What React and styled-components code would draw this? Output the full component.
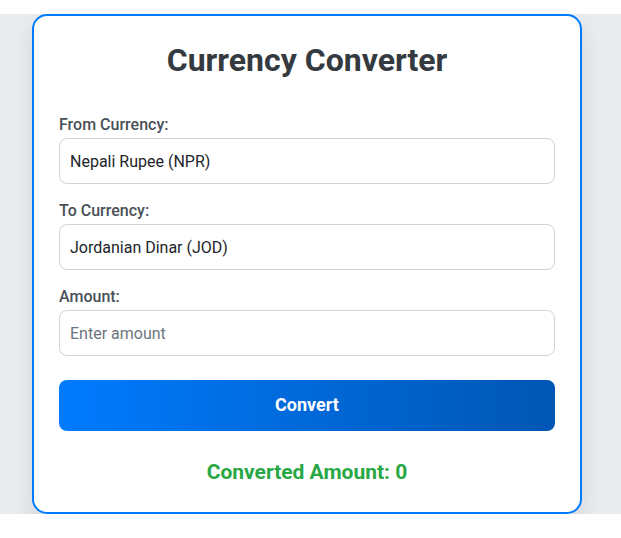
import { useState } from "react";
import styled, { createGlobalStyle } from "styled-components";

const GlobalStyle = createGlobalStyle`
body {
    margin: 0;
    background: #ffffff;
    font-family: 'Roboto', 'Liberation Sans', sans-serif;
}
* {
    box-sizing: border-box;
}
`

const currencies = [
    'Nepali Rupee (NPR)',
    'Jordanian Dinar (JOD)',
    'US Dollar (USD)',
    'Euro (EUR)',
    'Indian Rupee (INR)',
]

export default function App() {
    const [from, setFrom] = useState(currencies[0])
    const [to, setTo] = useState(currencies[1])
    const [amount, setAmount] = useState('')
    const [result, setResult] = useState(0)

    return (<Page>
        <GlobalStyle />
        <Card>
            <Title>Currency Converter</Title>
            <Group>
                <Label>From Currency:</Label>
                <Select value={from} onChange={(e) => setFrom(e.target.value)}>
                    {currencies.map(c => <option key={c}>{c}</option>)}
                </Select>
            </Group>
            <Group>
                <Label>To Currency:</Label>
                <Select value={to} onChange={(e) => setTo(e.target.value)}>
                    {currencies.map(c => <option key={c}>{c}</option>)}
                </Select>
            </Group>
            <Group>
                <Label>Amount:</Label>
                <Input
                    type="number"
                    placeholder="Enter amount"
                    value={amount}
                    onChange={(e) => setAmount(e.target.value)} />
            </Group>
            <ConvertButton onClick={() => setResult(Number(amount) || 0)}>Convert</ConvertButton>
            <Result>Converted Amount: {result}</Result>
        </Card>
    </Page>)
}

const Page = styled.div`
margin-top: 14px;
height: 500px;
background: #e9ecef;
display: flex;
align-items: flex-start;
padding-left: 32px;
`
const Card = styled.div`
width: 550px;
height: 500px;
background: #ffffff;
border: 2px solid #007bff;
border-radius: 15px;
box-shadow: 0px 10px 20px rgba(0, 0, 0, 0.1);
padding: 25px;
`
const Title = styled.h2`
margin: 1px 0 36px;
text-align: center;
font-size: 32px;
font-weight: 700;
color: #343a40;
line-height: 37px;
`
const Group = styled.div`
margin-bottom: 17px;
`
const Label = styled.label`
display: block;
margin-bottom: 4px;
font-size: 16px;
line-height: 19px;
font-weight: 500;
color: #495057;
`
const fieldStyles = `
display: block;
width: 100%;
height: 46px;
padding: 0 10px;
font-family: 'Roboto', 'Liberation Sans', sans-serif;
font-size: 16px;
color: #212529;
background: #ffffff;
border: 1px solid #ced4da;
border-radius: 8px;
outline: none;
`
const Select = styled.select`
${fieldStyles}
appearance: none;
`
const Input = styled.input`
${fieldStyles}
&::placeholder {
    color: #6c757d;
}
&::-webkit-inner-spin-button,
&::-webkit-outer-spin-button {
    -webkit-appearance: none;
    margin: 0;
}
`
const ConvertButton = styled.button`
display: block;
width: 100%;
height: 51px;
margin-top: 24px;
padding: 0 0 2px;
border: none;
border-radius: 8px;
background: linear-gradient(to right, #007bff, #0056b3);
color: #ffffff;
font-family: 'Roboto', 'Liberation Sans', sans-serif;
font-size: 18px;
font-weight: 700;
cursor: pointer;
`
const Result = styled.p`
margin: 29px 0 0;
text-align: center;
font-size: 21px;
line-height: 25px;
font-weight: 700;
color: #28a745;
`
